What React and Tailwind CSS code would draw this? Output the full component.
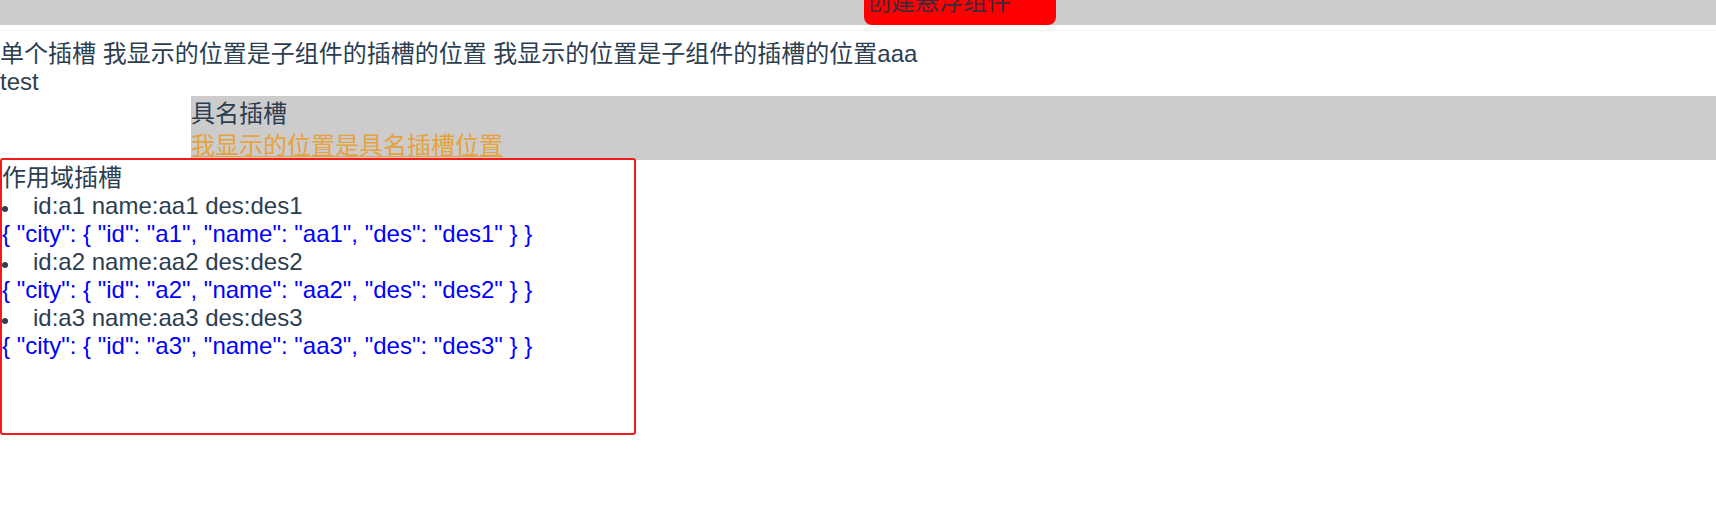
import React from "react";

const items = [
  { id: "a1", name: "aa1", des: "des1" },
  { id: "a2", name: "aa2", des: "des2" },
  { id: "a3", name: "aa3", des: "des3" },
];

const cjkLine = "h-[32px] pt-[2px] leading-[32px] whitespace-nowrap";

export default function App() {
  return (
    <div className="w-[1716px] h-[515px] overflow-hidden bg-white text-[#2c3e50] text-[24px] leading-[28px] font-['Liberation_Sans','Noto_Sans_CJK_SC',sans-serif]">
      <div className="h-[25px] bg-[#cccccc] flex items-end overflow-hidden">
        <button className="ml-[864px] w-[192px] h-[50px] shrink-0 bg-[#ff0000] rounded-[8px] flex items-end pb-[7px] pl-[3px] text-[#3a2a40] text-[24px] leading-[32px] cursor-pointer">
          创建悬浮组件
        </button>
      </div>
      <div className="h-[5px]" />
      <div className="h-[6px] border-t border-[#f3f3f3]" />
      <div className={cjkLine}>单个插槽 我显示的位置是子组件的插槽的位置 我显示的位置是子组件的插槽的位置aaa</div>
      <div>test</div>
      <div className="ml-[191px] h-[64px] bg-[#cccccc]">
        <div className={cjkLine}>具名插槽</div>
        <div className={cjkLine}>
          <span className="text-[#e6a23c] underline decoration-1 underline-offset-[2px]">我显示的位置是具名插槽位置</span>
        </div>
      </div>
      <div className="relative -mt-[2px] w-[636px] h-[277px] border-2 border-[#f21c1c] rounded-[3px]">
        <div className={cjkLine}>作用域插槽</div>
        <ul>
          {items.map((it) => (
            <li key={it.id}>
              <div className="flex">
                <span className="w-[31px] shrink-0 flex">
                  <span className="mt-[14px] w-[6px] h-[6px] rounded-full bg-[#2c3e50]" />
                </span>
                <span>
                  id:{it.id} name:{it.name} des:{it.des}
                </span>
              </div>
              <div className="text-[#0000ff]">
                {`{ "city": { "id": "${it.id}", "name": "${it.name}", "des": "${it.des}" } }`}
              </div>
            </li>
          ))}
        </ul>
      </div>
    </div>
  );
}
